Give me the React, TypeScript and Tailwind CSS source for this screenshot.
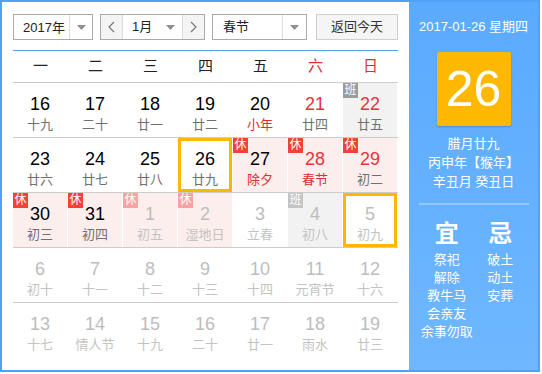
type Day = {
  n: number;
  l: string;
  numRed?: boolean;
  lunarRed?: boolean;
  other?: boolean;
  bg?: "pink" | "gray";
  badge?: "休" | "班";
  sel?: boolean;
};

const weeks: Day[][] = [
  [
    { n: 16, l: "十九" },
    { n: 17, l: "二十" },
    { n: 18, l: "廿一" },
    { n: 19, l: "廿二" },
    { n: 20, l: "小年", lunarRed: true },
    { n: 21, l: "廿四", numRed: true },
    { n: 22, l: "廿五", numRed: true, bg: "gray", badge: "班" },
  ],
  [
    { n: 23, l: "廿六" },
    { n: 24, l: "廿七" },
    { n: 25, l: "廿八" },
    { n: 26, l: "廿九", sel: true },
    { n: 27, l: "除夕", lunarRed: true, bg: "pink", badge: "休" },
    { n: 28, l: "春节", numRed: true, lunarRed: true, bg: "pink", badge: "休" },
    { n: 29, l: "初二", numRed: true, bg: "pink", badge: "休" },
  ],
  [
    { n: 30, l: "初三", bg: "pink", badge: "休" },
    { n: 31, l: "初四", bg: "pink", badge: "休" },
    { n: 1, l: "初五", other: true, bg: "pink", badge: "休" },
    { n: 2, l: "湿地日", other: true, bg: "pink", badge: "休" },
    { n: 3, l: "立春", other: true },
    { n: 4, l: "初八", other: true, bg: "gray", badge: "班" },
    { n: 5, l: "初九", other: true, sel: true },
  ],
  [
    { n: 6, l: "初十", other: true },
    { n: 7, l: "十一", other: true },
    { n: 8, l: "十二", other: true },
    { n: 9, l: "十三", other: true },
    { n: 10, l: "十四", other: true },
    { n: 11, l: "元宵节", other: true },
    { n: 12, l: "十六", other: true },
  ],
  [
    { n: 13, l: "十七", other: true },
    { n: 14, l: "情人节", other: true },
    { n: 15, l: "十九", other: true },
    { n: 16, l: "二十", other: true },
    { n: 17, l: "廿一", other: true },
    { n: 18, l: "雨水", other: true },
    { n: 19, l: "廿三", other: true },
  ],
];

function Caret() {
  return (
    <svg width="9" height="5" viewBox="0 0 9 5">
      <path d="M0 0H9L4.5 5Z" fill="#8f8f8f" />
    </svg>
  );
}

function Chevron({ left }: { left?: boolean }) {
  return (
    <svg width="7" height="12" viewBox="0 0 7 12">
      <path d={left ? "M6 1L1 6L6 11" : "M1 1L6 6L1 11"} fill="none" stroke="#777" strokeWidth="1.2" />
    </svg>
  );
}

function Cell({ d }: { d: Day }) {
  const bg = d.bg === "pink" ? "bg-[#fdeeee]" : d.bg === "gray" ? "bg-[#f2f2f2]" : "bg-white";
  const num = d.other ? "text-[#bdbdbd]" : d.numRed ? "text-[#e8323a]" : "text-black";
  const lunar = d.other ? "text-[#c3c3c3]" : d.lunarRed ? "text-[#e02d2d]" : "text-[#707070]";
  let badge = "";
  if (d.badge === "休") badge = d.other ? "bg-[#f7a3a3]" : "bg-[#f2403b]";
  if (d.badge === "班") badge = d.other ? "bg-[#c4c4c4]" : "bg-[#9c9c9c]";
  return (
    <div className="border-r border-white h-full">
      <div
        className={`relative h-full flex flex-col items-center ${bg} ${
          d.sel ? "border-[3px] border-[#ffb700] pt-[7px]" : "pt-[10px]"
        }`}
      >
        {d.badge && (
          <div
            className={`absolute ${d.sel ? "-top-[3px] -left-[3px]" : "top-0 left-0"} w-[15px] h-[15px] ${badge} text-white text-[12px] leading-[15px] text-center`}
          >
            {d.badge}
          </div>
        )}
        <div className={`text-[18px] leading-[22px] ${num}`}>{d.n}</div>
        <div className={`text-[13px] leading-[18px] mt-[1px] ${lunar}`}>{d.l}</div>
      </div>
    </div>
  );
}

export default function App() {
  const heads = ["一", "二", "三", "四", "五", "六", "日"];
  return (
    <div className="w-[540px] h-[372px] border-2 border-[#4ea2f7] flex bg-white font-['Liberation_Sans','Noto_Sans_CJK_SC',sans-serif]">
      <div className="w-[407px] px-[11px] pt-[12px]">
        <div className="flex h-[26px] text-[13px] text-[#222]">
          <div className="w-[80px] flex border border-[#a9a9a9] bg-white">
            <div className="flex-1 flex items-center pl-[9px] leading-none">2017年</div>
            <div className="w-[23px] border-l border-[#dcdcdc] flex items-center justify-center">
              <Caret />
            </div>
          </div>
          <div className="ml-[7px] w-[105px] flex border border-[#a9a9a9]">
            <div className="w-[22px] bg-[#f4f4f4] border-r border-[#dcdcdc] flex items-center justify-center">
              <Chevron left />
            </div>
            <div className="flex-1 flex items-center pl-[9px] bg-white">1月</div>
            <div className="w-[16px] flex items-center bg-white">
              <Caret />
            </div>
            <div className="w-[22px] bg-[#f4f4f4] border-l border-[#dcdcdc] flex items-center justify-center">
              <Chevron />
            </div>
          </div>
          <div className="ml-[7px] w-[95px] flex border border-[#a9a9a9] bg-white">
            <div className="flex-1 flex items-center pl-[10px]">春节</div>
            <div className="w-[24px] border-l border-[#dcdcdc] flex items-center justify-center">
              <Caret />
            </div>
          </div>
          <div className="ml-[9px] w-[82px] flex items-center justify-center border border-[#cfcfcf] bg-[#f5f5f5] text-[#333]">
            返回今天
          </div>
        </div>
        <div className="mt-[10px] h-px bg-[#4ea2f7]" />
        <div className="grid grid-cols-7 h-[32px] border-b border-[#cccccc]">
          {heads.map((h, i) => (
            <div
              key={h}
              className={`flex items-center justify-center text-[15px] ${i > 4 ? "text-[#e02d2d]" : "text-[#222]"}`}
            >
              {h}
            </div>
          ))}
        </div>
        {weeks.map((w, i) => (
          <div key={i} className={`grid grid-cols-7 h-[55px] ${i < 4 ? "border-b border-[#cccccc]" : ""}`}>
            {w.map((d, j) => (
              <Cell key={j} d={d} />
            ))}
          </div>
        ))}
      </div>
      <div className="flex-1 bg-gradient-to-b from-[#5aaaff] to-[#6fb7ff] text-white flex flex-col items-center">
        <div className="mt-[16px] text-[13px] leading-[18px]">2017-01-26 星期四</div>
        <div className="mt-[16px] w-[74px] h-[74px] bg-[#ffb800] rounded-[2px] shadow-[0_1px_2px_rgba(0,0,0,0.2)] flex items-center justify-center text-[50px] leading-none">
          26
        </div>
        <div className="mt-[8px] text-[13px] leading-[19px] text-center">
          <div>腊月廿九</div>
          <div>丙申年【猴年】</div>
          <div>辛丑月 癸丑日</div>
        </div>
        <div className="mt-[12px] h-[2px] w-[110px] bg-[#94caff]" />
        <div className="mt-[14px] w-full px-[11px] grid grid-cols-2 text-center">
          <div>
            <div className="text-[24px] leading-[30px] font-bold">宜</div>
            <div className="mt-[2px] text-[13px] leading-[18px]">
              <div>祭祀</div>
              <div>解除</div>
              <div>教牛马</div>
              <div>会亲友</div>
              <div>余事勿取</div>
            </div>
          </div>
          <div>
            <div className="text-[24px] leading-[30px] font-bold">忌</div>
            <div className="mt-[2px] text-[13px] leading-[18px]">
              <div>破土</div>
              <div>动土</div>
              <div>安葬</div>
            </div>
          </div>
        </div>
      </div>
    </div>
  );
}
